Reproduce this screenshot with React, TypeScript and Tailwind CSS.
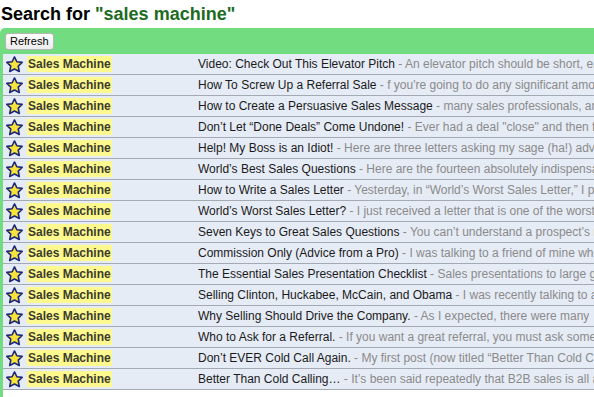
const ROWS = [
  { title: "Video: Check Out This Elevator Pitch", snippet: "An elevator pitch should be short, easy to remember and to the point." },
  { title: "How To Screw Up a Referral Sale", snippet: "f you're going to do any significant amount of business" },
  { title: "How to Create a Persuasive Sales Message", snippet: "many sales professionals, and most marketers" },
  { title: "Don\u2019t Let \u201CDone Deals\u201D Come Undone!", snippet: "Ever had a deal \"close\" and then fall apart?" },
  { title: "Help! My Boss is an Idiot!", snippet: "Here are three letters asking my sage (ha!) advice" },
  { title: "World\u2019s Best Sales Questions", snippet: "Here are the fourteen absolutely indispensable questions" },
  { title: "How to Write a Sales Letter", snippet: "Yesterday, in \u201CWorld\u2019s Worst Sales Letter,\u201D I promised" },
  { title: "World\u2019s Worst Sales Letter?", snippet: "I just received a letter that is one of the worst" },
  { title: "Seven Keys to Great Sales Questions", snippet: "You can\u2019t understand a prospect\u2019s needs" },
  { title: "Commission Only (Advice from a Pro)", snippet: "I was talking to a friend of mine who" },
  { title: "The Essential Sales Presentation Checklist", snippet: "Sales presentations to large groups" },
  { title: "Selling Clinton, Huckabee, McCain, and Obama", snippet: "I was recently talking to a" },
  { title: "Why Selling Should Drive the Company.", snippet: "As I expected, there were many" },
  { title: "Who to Ask for a Referral.", snippet: "If you want a great referral, you must ask someone" },
  { title: "Don\u2019t EVER Cold Call Again.", snippet: "My first post (now titled \u201CBetter Than Cold Calling\u201D)" },
  { title: "Better Than Cold Calling\u2026", snippet: "It\u2019s been said repeatedly that B2B sales is all about" },
];

function Star() {
  return (
    <svg width="17" height="17" viewBox="0 0 16 16">
      <polygon
        points="8,0.9 10.2,5.4 15.2,6 11.5,9.5 12.5,14.6 8,12.2 3.5,14.6 4.5,9.5 0.8,6 5.8,5.4"
        fill="#f7e43a"
        stroke="#1d2779"
        strokeWidth="1.5"
        strokeLinejoin="round"
      />
    </svg>
  );
}

export default function App() {
  return (
    <div className="w-[594px] h-[397px] overflow-hidden bg-white font-['Liberation_Sans',Arial,sans-serif]">
      {/* Heading */}
      <h1 className="h-[28px] pt-[3px] pl-[1px] text-[18px] leading-[22px] font-bold text-black whitespace-nowrap">
        Search for <span className="text-[#1c6b1f]">"sales machine"</span>
      </h1>

      {/* Green frame */}
      <div className="bg-[#72dc80] rounded-tl-[5px] pl-[3px] h-[369px] flex flex-col">
        <div className="h-[26px] flex items-center pl-[2px] pt-[1px]">
          <button className="h-[17px] px-[4px] text-[11px] leading-[15px] text-black bg-gradient-to-b from-white to-[#ececec] border border-[#b5b5b5] rounded-[3px]">
            Refresh
          </button>
        </div>

        <div className="flex-1 bg-white overflow-hidden">
          {ROWS.map((row, i) => (
            <div
              key={i}
              className="h-[21px] flex items-center bg-[#e6ecf6] border-b border-[#a4aab4] whitespace-nowrap text-[12px] leading-[16px]"
            >
              <div className="w-[24px] shrink-0 pl-[3px] flex items-center">
                <Star />
              </div>
              <div className="w-[171px] shrink-0 flex">
                <span className="bg-[#fdf98f] px-[1px] font-bold text-[#3c3c2c]">Sales Machine</span>
              </div>
              <div className="overflow-hidden text-[#1a1a1a]">
                {row.title}
                <span className="text-[#8a8a8a]"> - {row.snippet}</span>
              </div>
            </div>
          ))}
        </div>
      </div>
    </div>
  );
}
